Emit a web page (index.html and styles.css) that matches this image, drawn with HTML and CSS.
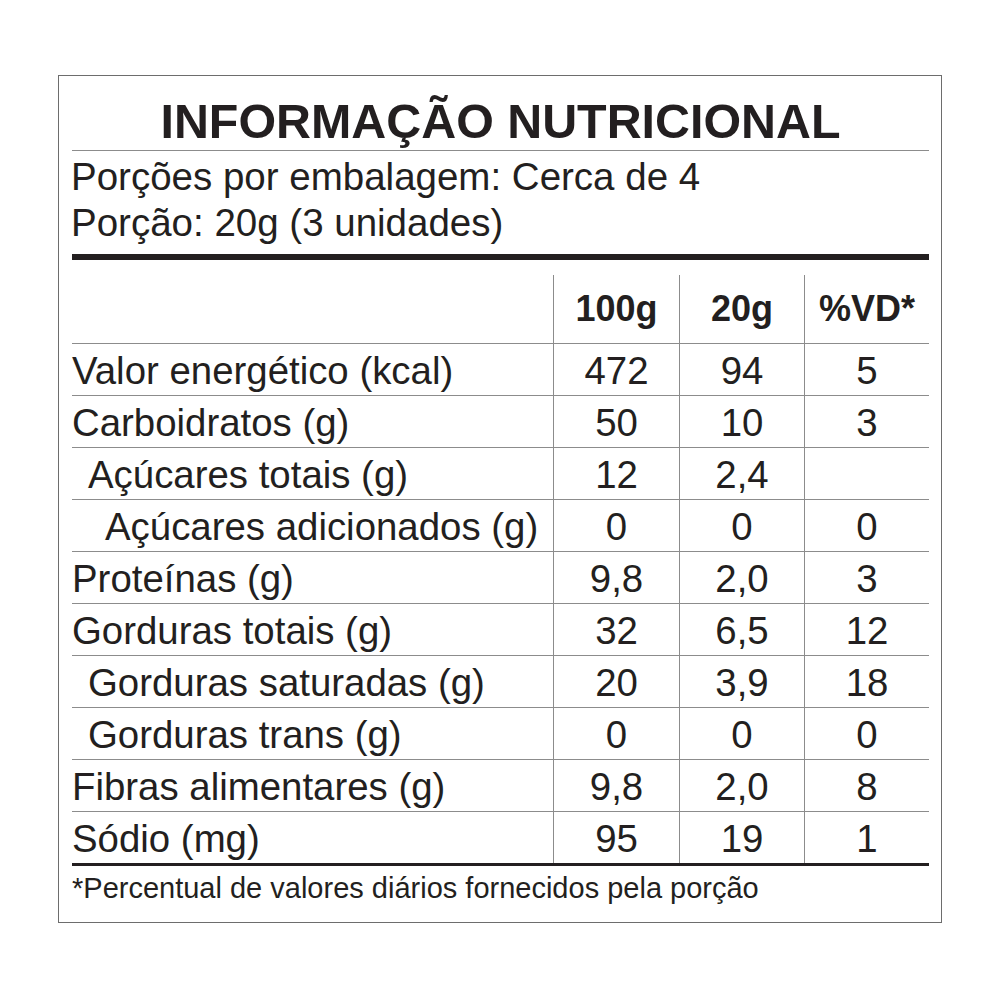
FILE: index.html
```html
<!DOCTYPE html>
<html lang="pt">
<head>
<meta charset="utf-8">
<title>Informação Nutricional</title>
<link rel="stylesheet" href="styles.css">
</head>
<body>
<div class="label">
  <h1 class="title">INFORMAÇÃO NUTRICIONAL</h1>
  <div class="serving">
    <p>Porções por embalagem: Cerca de 4</p>
    <p>Porção: 20g (3 unidades)</p>
  </div>
  <div class="table">
    <div class="row head">
      <div class="name"></div>
      <div class="val">100g</div>
      <div class="val">20g</div>
      <div class="val">%VD*</div>
    </div>
    <div class="row">
      <div class="name">Valor energético (kcal)</div>
      <div class="val">472</div><div class="val">94</div><div class="val">5</div>
    </div>
    <div class="row">
      <div class="name">Carboidratos (g)</div>
      <div class="val">50</div><div class="val">10</div><div class="val">3</div>
    </div>
    <div class="row">
      <div class="name sub1">Açúcares totais (g)</div>
      <div class="val">12</div><div class="val">2,4</div><div class="val"></div>
    </div>
    <div class="row">
      <div class="name sub2">Açúcares adicionados (g)</div>
      <div class="val">0</div><div class="val">0</div><div class="val">0</div>
    </div>
    <div class="row">
      <div class="name">Proteínas (g)</div>
      <div class="val">9,8</div><div class="val">2,0</div><div class="val">3</div>
    </div>
    <div class="row">
      <div class="name">Gorduras totais (g)</div>
      <div class="val">32</div><div class="val">6,5</div><div class="val">12</div>
    </div>
    <div class="row">
      <div class="name sub1">Gorduras saturadas (g)</div>
      <div class="val">20</div><div class="val">3,9</div><div class="val">18</div>
    </div>
    <div class="row">
      <div class="name sub1">Gorduras trans (g)</div>
      <div class="val">0</div><div class="val">0</div><div class="val">0</div>
    </div>
    <div class="row">
      <div class="name">Fibras alimentares (g)</div>
      <div class="val">9,8</div><div class="val">2,0</div><div class="val">8</div>
    </div>
    <div class="row last">
      <div class="name">Sódio (mg)</div>
      <div class="val">95</div><div class="val">19</div><div class="val">1</div>
    </div>
  </div>
  <p class="note">*Percentual de valores diários fornecidos pela porção</p>
</div>
</body>
</html>
```

FILE: styles.css
```css
html, body {
  margin: 0;
  padding: 0;
  background: #ffffff;
}

body {
  font-family: "Liberation Sans", Arial, sans-serif;
  color: #231f20;
}

.label {
  box-sizing: border-box;
  margin: 75px 0 0 58px;
  width: 884px;
  height: 848px;
  border: 1px solid #6d6d6d;
  padding: 0 12px 0 13px;
}

.title {
  margin: 0;
  padding-top: 16px;
  font-size: 48.4px;
  font-weight: bold;
  line-height: 58px;
  text-align: center;
  border-bottom: 1px solid #8c8c8c;
}

.serving {
  padding-top: 3px;
  padding-bottom: 8px;
  border-bottom: 6px solid #231f20;
}

.serving p {
  margin: 0;
  font-size: 38.5px;
  line-height: 46px;
  text-indent: -1px;
}

.table {
  margin-top: 15px;
  border-bottom: 3px solid #231f20;
}

.row {
  display: grid;
  grid-template-columns: 481px 126px 125px 125px;
  height: 52px;
  box-sizing: border-box;
  border-bottom: 1px solid #8c8c8c;
}

.row.last {
  border-bottom: none;
  height: 51px;
}

.row > div {
  font-size: 38.4px;
  line-height: 48px;
  padding-top: 3px;
  white-space: nowrap;
}

.row .val {
  text-align: center;
  border-left: 1px solid #8c8c8c;
}

.row.head {
  height: 69px;
}

.row.head > div {
  font-size: 36px;
  font-weight: bold;
  line-height: 68px;
  padding-top: 0;
}

.name.sub1 {
  padding-left: 16px;
}

.name.sub2 {
  padding-left: 33px;
}

.note {
  margin: 6px 0 0;
  font-size: 29px;
  line-height: 32px;
}
```
